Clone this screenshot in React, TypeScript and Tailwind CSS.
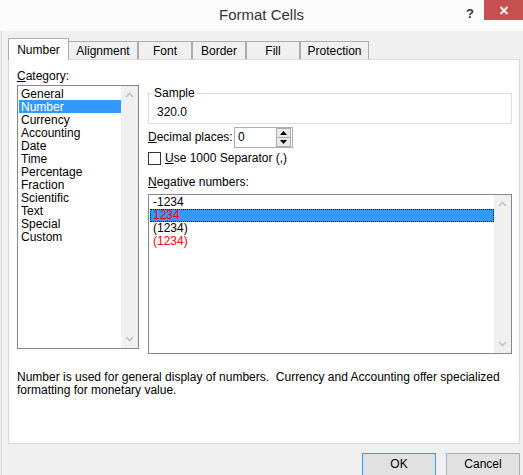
import React from "react";

const font = { fontFamily: '"Liberation Sans", Arial, sans-serif' };

function ChevUp() {
  return (
    <svg width="9" height="6" viewBox="0 0 9 6">
      <path d="M1 5 L4.5 1.5 L8 5" fill="none" stroke="#c2c2c2" strokeWidth="1.6" />
    </svg>
  );
}
function ChevDown() {
  return (
    <svg width="9" height="6" viewBox="0 0 9 6">
      <path d="M1 1 L4.5 4.5 L8 1" fill="none" stroke="#c2c2c2" strokeWidth="1.6" />
    </svg>
  );
}

function Scrollbar() {
  return (
    <div className="w-[17px] h-full bg-[#f0f0f0] flex flex-col items-center justify-between py-[6px]">
      <ChevUp />
      <ChevDown />
    </div>
  );
}

const categories = [
  "General",
  "Number",
  "Currency",
  "Accounting",
  "Date",
  "Time",
  "Percentage",
  "Fraction",
  "Scientific",
  "Text",
  "Special",
  "Custom",
];

const tabCls =
  "h-[18px] border border-b-0 border-[#acacac] bg-[#f0f0f0] flex items-start justify-center pt-[3px]";

export default function App() {
  return (
    <div
      className="w-[523px] h-[475px] overflow-hidden bg-[#f0f0f0] text-[12px] leading-[13px] text-black flex flex-col"
      style={font}
    >
      {/* Title bar */}
      <div className="h-[31px] bg-[#fcfcfc] flex items-start shrink-0">
        <div className="w-[70px] shrink-0" />
        <div className="flex-1 flex justify-center pt-[6px]">
          <span className="text-[15px] leading-[18px] text-[#333333]">Format Cells</span>
        </div>
        <div className="w-[70px] shrink-0 flex items-start justify-end">
          <span className="mt-[6px] mr-[10px] text-[13px] leading-[15px] font-bold text-[#333]">?</span>
          <div className="w-[39px] h-[20px] bg-[#c75050] flex items-center justify-center">
            <svg width="10" height="9" viewBox="0 0 10 9">
              <path d="M1.5 1 L8.5 8 M8.5 1 L1.5 8" stroke="white" strokeWidth="1.8" />
            </svg>
          </div>
        </div>
      </div>

      {/* Body */}
      <div className="flex-1 flex flex-col border-l border-[#d4d4d4] ml-[1px] pl-[6px] pr-[2px] pt-[7px]">
        {/* Tabs */}
        <div className="flex items-end h-[21px] relative z-10">
          <div className="w-[61px] h-[22px] mb-[-1px] bg-white border border-b-0 border-[#acacac] flex items-start justify-center pt-[5px]">
            Number
          </div>
          <div className={"w-[70px] ml-[-1px] " + tabCls}>Alignment</div>
          <div className={"w-[54px] " + tabCls}>Font</div>
          <div className={"w-[54px] " + tabCls}>Border</div>
          <div className={"w-[54px] " + tabCls}>Fill</div>
          <div className={"w-[69px] " + tabCls}>Protection</div>
        </div>

        {/* Panel */}
        <div className="w-[512px] h-[385px] bg-white border border-[#d9d9d9] shrink-0 flex flex-col pl-[8px] pt-[10px]">
          <div className="flex gap-[9px]">
            {/* Left column */}
            <div className="w-[122px] flex flex-col">
              <div className="h-[13px]">
                <span className="underline underline-offset-1">C</span>ategory:
              </div>
              <div className="mt-[2px] h-[264px] border border-[#828790] flex">
                <div className="flex-1 pt-[1px] pl-[1px]">
                  {categories.map((c) => (
                    <div
                      key={c}
                      className={
                        "h-[13px] leading-[15px] pl-[2px] " +
                        (c === "Number" ? "bg-[#3399ff] text-white" : "")
                      }
                    >
                      {c}
                    </div>
                  ))}
                </div>
                <Scrollbar />
              </div>
            </div>

            {/* Right column */}
            <div className="w-[364px] flex flex-col pt-[23px]">
              <div className="h-[31px] border border-[#dcdcdc] pl-[8px] flex flex-col">
                <div className="-mt-[7px] ml-[3px] px-[2px] bg-white w-fit h-[13px] -translate-x-[8px]">Sample</div>
                <div className="mt-[6px] h-[13px]">320.0</div>
              </div>

              <div className="mt-[3px] flex items-center h-[21px]">
                <div className="w-[86px]">
                  <span className="underline underline-offset-1">D</span>ecimal places:
                </div>
                <div className="w-[59px] h-[21px] border border-[#abadb3] bg-white flex items-center">
                  <span className="flex-1 pl-[3px]">0</span>
                  <div className="w-[15px] h-[19px] mr-[1px] border border-[#acacac] bg-[#e9e9e9] flex flex-col">
                    <div className="flex-1 flex items-center justify-center border-b border-[#acacac]">
                      <svg width="7" height="4" viewBox="0 0 7 4">
                        <path d="M0 4 L3.5 0 L7 4 Z" fill="#000" />
                      </svg>
                    </div>
                    <div className="flex-1 flex items-center justify-center">
                      <svg width="7" height="4" viewBox="0 0 7 4">
                        <path d="M0 0 L3.5 4 L7 0 Z" fill="#000" />
                      </svg>
                    </div>
                  </div>
                </div>
              </div>

              <div className="mt-[4px] flex items-center h-[13px] gap-[4px]">
                <div className="w-[13px] h-[13px] border border-[#333] bg-white" />
                <div>
                  <span className="underline underline-offset-1">U</span>se 1000 Separator (,)
                </div>
              </div>

              <div className="mt-[11px] h-[13px]">
                <span className="underline underline-offset-1">N</span>egative numbers:
              </div>

              <div className="mt-[5px] h-[160px] border border-[#828790] flex">
                <div className="flex-1 pt-[1px] pl-[1px]">
                  <div className="h-[13px] pl-[3px]">-1234</div>
                  <div className="h-[13px] pl-[2px] bg-[#3399ff] text-[#ff0000] border border-dotted border-black leading-[11px]">
                    1234
                  </div>
                  <div className="h-[13px] pl-[3px]">(1234)</div>
                  <div className="h-[13px] pl-[3px] text-[#ff0000]">(1234)</div>
                </div>
                <Scrollbar />
              </div>
            </div>
          </div>

          <div className="mt-[17px] w-[495px]">
            Number is used for general display of numbers.&nbsp; Currency and Accounting offer specialized
            formatting for monetary value.
          </div>
        </div>

        {/* Buttons */}
        <div className="mt-[9px] flex justify-end gap-[10px] pr-[1px]">
          <div className="w-[74px] h-[23px] bg-[#e1e1e1] border border-[#3399ff] flex items-center justify-center">
            OK
          </div>
          <div className="w-[74px] h-[23px] bg-[#e1e1e1] border border-[#acacac] flex items-center justify-center">
            Cancel
          </div>
        </div>
      </div>
    </div>
  );
}
